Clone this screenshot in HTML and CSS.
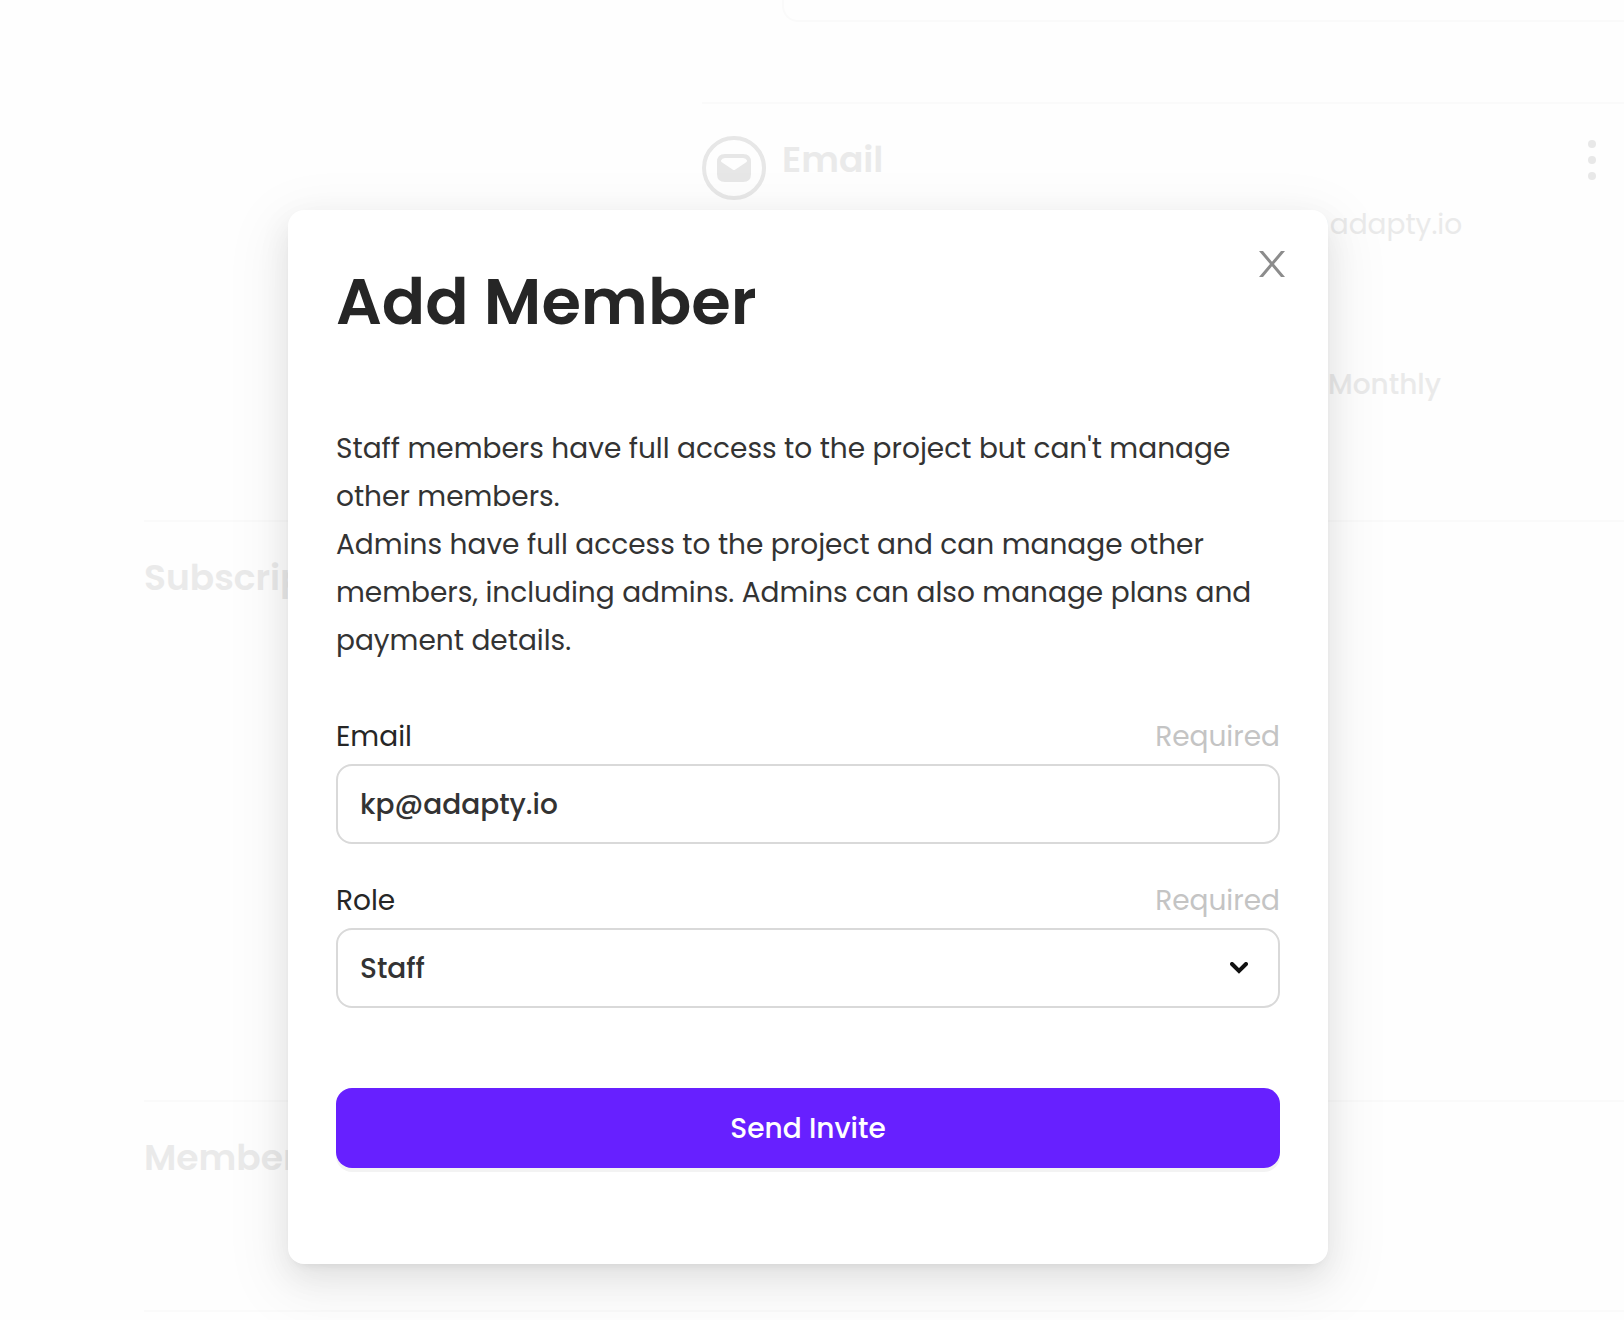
FILE: index.html
```html
<!DOCTYPE html>
<html lang="en">
<head>
<meta charset="utf-8">
<meta name="viewport" content="width=device-width, initial-scale=1">
<title>Add Member</title>
<link rel="stylesheet" href="styles.css">
</head>
<body>
<div class="page">
  <main class="account">
    <section class="billing">
      <div class="card"></div>
      <article class="contact">
        <svg class="contact-icon" viewBox="0 0 64 64" aria-hidden="true">
          <circle cx="32" cy="32" r="30" fill="none" stroke="currentColor" stroke-width="4"/>
          <path fill="currentColor" fill-rule="evenodd" d="M23 18h18q8 0 8 8v12q0 8-8 8H23q-8 0-8-8V26q0-8 8-8zM19 24.500q-.2 1 .8 1.800L31 33.800q1 .6 2 0l11.200-7.500q1-.8.8-1.800-.8-2.500-4-2.500H23q-3.200 0-4 2.500z"/>
        </svg>
        <div class="contact-body">
          <div class="contact-head">
            <h2>Email</h2>
            <svg class="more" viewBox="0 0 8 40" aria-hidden="true">
              <circle cx="4" cy="4" r="4"/><circle cx="4" cy="20" r="4"/><circle cx="4" cy="36" r="4"/>
            </svg>
          </div>
          <div class="values">
            <span>kp@adapty.io</span>
            <span class="plan">Monthly</span>
          </div>
        </div>
      </article>
    </section>
    <section class="block subscription"><h2>Subscrip</h2></section>
    <section class="block members"><h2>Members</h2></section>
    <section class="block"></section>
  </main>

  <div class="overlay">
    <div class="modal" role="dialog" aria-modal="true" aria-labelledby="modal-title">
      <button class="close" type="button" aria-label="Close">
        <svg viewBox="0 0 26 26" aria-hidden="true">
          <path fill="currentColor" d="M0 0h4l9 10.800L22 0h4L15 13l11 13h-4l-9-10.800L4 26H0l11-13z"/>
        </svg>
      </button>
      <h1 id="modal-title">Add Member</h1>
      <p class="intro">Staff members have full access to the project but can't manage<br>other members.<br>Admins have full access to the project and can manage other<br>members, including admins. Admins can also manage plans and<br>payment details.</p>
      <form>
        <div class="field">
          <div class="field-head"><label for="email">Email</label><span>Required</span></div>
          <input class="control" id="email" type="text" value="kp@adapty.io">
        </div>
        <div class="field">
          <div class="field-head"><label for="role">Role</label><span>Required</span></div>
          <div class="select">
            <select class="control" id="role"><option>Staff</option><option>Admin</option></select>
            <svg viewBox="0 0 18 12" aria-hidden="true">
              <path d="M2 2l7 7 7-7" fill="none" stroke="currentColor" stroke-width="4" stroke-linecap="round"/>
            </svg>
          </div>
        </div>
        <button class="submit" type="button">Send Invite</button>
      </form>
    </div>
  </div>
</div>
</body>
</html>
```
FILE: styles.css
```css
* { box-sizing: border-box; }

body {
  margin: 0;
  background: #fefefe;
  color: #333;
  font: 400 28px/48px Poppins, Inter, "Open Sans", sans-serif;
  text-rendering: optimizeLegibility;
}

h1, h2, p { margin: 0; }

.page {
  position: relative;
  height: 100vh;
  overflow: hidden;
}

/* faded account page behind the dialog */
.account {
  padding-left: 144px;
  color: #eaeaea;
}

h2 {
  font-size: 36px;
  line-height: 56px;
  font-weight: 600;
}

.billing {
  height: 520px;
  padding-left: 558px;
}

.card {
  height: 22px;
  margin: 0 -16px 80px 80px;
  border: 2px solid #fafafa;
  border-top: 0;
  border-radius: 0 0 0 16px;
}

.contact {
  display: flex;
  gap: 16px;
  padding: 32px 28px 0 0;
  border-top: 2px solid #fafafa;
}

.contact-icon {
  flex: none;
  width: 64px;
  height: 64px;
  color: #e7e7e7;
}

.contact-body { flex: 1; }

.contact-head {
  display: flex;
  justify-content: space-between;
  align-items: center;
  height: 48px;
}

.more {
  width: 8px;
  height: 40px;
  fill: #e8e8e8;
}

.values {
  display: flex;
  flex-direction: column;
  gap: 112px;
  margin-top: 17px;
  padding-left: 486px;
}

.plan {
  padding-left: 60px;
  font-weight: 500;
}

.block {
  border-top: 2px solid #fafafa;
  padding-top: 28px;
}

.subscription { height: 580px; }
.members { height: 210px; }

/* dialog */
.overlay {
  position: absolute;
  inset: 0;
  display: flex;
  justify-content: center;
  align-items: flex-start;
  padding: 210px 8px 0 0;
}

.modal {
  position: relative;
  width: 100%;
  max-width: 1040px;
  padding: 48px 48px 96px;
  border-radius: 16px;
  background: #fff;
  box-shadow:
    0 6px 12px -8px rgba(0, 0, 0, .12),
    0 12px 32px 0 rgba(0, 0, 0, .08),
    0 18px 56px 16px rgba(0, 0, 0, .05);
}

.close {
  position: absolute;
  top: 34px;
  right: 36px;
  display: grid;
  place-items: center;
  width: 40px;
  height: 40px;
  padding: 0;
  border: 0;
  background: none;
  color: #8c8c8c;
}

.close svg {
  width: 26px;
  height: 26px;
}

h1 {
  margin-bottom: 79px;
  color: #262626;
  font-size: 64px;
  line-height: 88px;
  font-weight: 600;
}

.intro { white-space: nowrap; }

form {
  display: flex;
  flex-direction: column;
  gap: 33px;
  margin-top: 48px;
}

.field-head {
  display: flex;
  justify-content: space-between;
  margin-bottom: 3px;
  color: #262626;
}

.field-head span { color: #c4c4c4; }

.control {
  display: block;
  width: 100%;
  height: 80px;
  padding: 2px 22px 0;
  border: 2px solid #d9d9d9;
  border-radius: 16px;
  background: #fff;
  color: #333;
  font: inherit;
  font-weight: 500;
  appearance: none;
  outline: 0;
}

.select {
  display: grid;
  align-items: center;
}

.select > * { grid-area: 1 / 1; }

.select svg {
  justify-self: end;
  width: 18px;
  height: 12px;
  margin-right: 32px;
  color: #111;
  pointer-events: none;
}

.submit {
  height: 80px;
  margin-top: 47px;
  padding: 2px 0 0;
  border: 0;
  border-radius: 16px;
  background: #6720ff;
  box-shadow: 0 4px 0 #f3f3f3;
  color: #fff;
  font: inherit;
  font-weight: 500;
}
```
